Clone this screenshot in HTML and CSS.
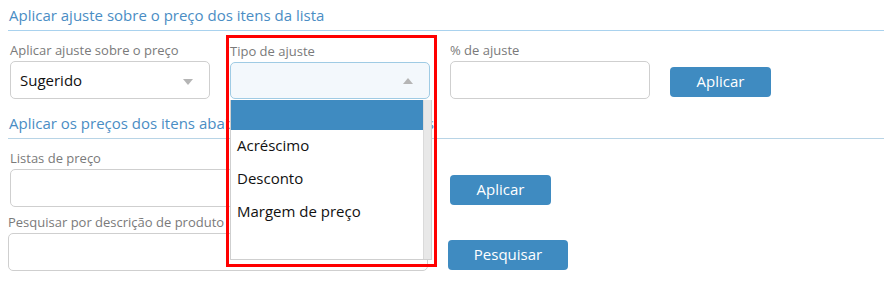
FILE: index.html
```html
<!DOCTYPE html>
<html lang="pt-BR">
<head>
    <meta charset="UTF-8">
    <title>Ajuste de preços</title>
    <link rel="stylesheet" href="styles.css">
</head>
<body>
    <div class="page">
        <div class="section">
            <div class="section-title">Aplicar ajuste sobre o preço dos itens da lista</div>
            <div class="row">
                <div class="field">
                    <label>Aplicar ajuste sobre o preço</label>
                    <div class="select">
                        <span>Sugerido</span>
                        <span class="caret down"></span>
                    </div>
                </div>
                <div class="field field-open">
                    <label>Tipo de ajuste</label>
                    <div class="select open">
                        <span></span>
                        <span class="caret up"></span>
                    </div>
                    <!-- open dropdown list -->
                    <div class="dropdown">
                        <div class="options">
                            <div class="option selected"></div>
                            <div class="option">Acréscimo</div>
                            <div class="option">Desconto</div>
                            <div class="option">Margem de preço</div>
                        </div>
                        <div class="scrollbar"></div>
                    </div>
                    <div class="highlight"></div>
                </div>
                <div class="field">
                    <label>% de ajuste</label>
                    <div class="input"></div>
                </div>
                <button class="btn">Aplicar</button>
            </div>
        </div>

        <div class="section">
            <div class="section-title">Aplicar os preços dos itens abaixo para as listas selecionadas</div>
            <div class="row">
                <div class="field wide">
                    <label>Listas de preço</label>
                    <div class="input"></div>
                </div>
                <button class="btn">Aplicar</button>
            </div>
            <div class="row row-search">
                <div class="field wide">
                    <label>Pesquisar por descrição de produto</label>
                    <div class="input"></div>
                </div>
                <button class="btn btn-wide">Pesquisar</button>
            </div>
        </div>
    </div>
</body>
</html>
```

FILE: styles.css
```css
body {
    margin: 0;
    font-family: "Open Sans", "Liberation Sans", sans-serif;
    background: #fff;
    color: #111;
}
.page {
    padding: 6px 0 0 8px;
}
.section-title {
    color: #4a8dc4;
    font-size: 15px;
    line-height: 18px;
    padding: 0 0 4px 1px;
    border-bottom: 1px solid #a9d2ee;
    margin-bottom: 12px;
    height: 20px;
}
.section + .section .section-title {
    border-bottom-color: #b8d4e6;
    margin-top: 15px;
    margin-bottom: 12px;
}
.row {
    display: flex;
    align-items: flex-end;
    gap: 20px;
    padding-left: 2px;
}
.row-search {
    padding-left: 0;
    margin-top: 8px;
}
.field {
    width: 200px;
    position: relative;
}
.field.wide {
    width: 420px;
}
label {
    display: block;
    color: #7a7a7a;
    font-size: 13px;
    line-height: 14px;
    height: 14px;
    margin-bottom: 4px;
}
.select, .input {
    box-sizing: border-box;
    height: 38px;
    border: 1px solid #cfcfcf;
    border-radius: 5px;
    display: flex;
    align-items: center;
    justify-content: space-between;
    padding: 0 16px 1px 9px;
    font-size: 15px;
}
.select.open {
    background: #f3f8fc;
    border-color: #9fcbe4;
    height: 37px;
}
.caret {
    width: 0;
    height: 0;
    border-left: 5px solid transparent;
    border-right: 5px solid transparent;
    margin-top: 4px;
}
.caret.down {
    border-top: 6px solid #b5b5b5;
}
.caret.up {
    border-bottom: 6px solid #b5b5b5;
    margin-top: 1px;
}
.btn {
    height: 30px;
    width: 101px;
    margin-bottom: 2px;
    background: #3f8bc1;
    color: #fff;
    border: none;
    border-radius: 4px;
    font-family: inherit;
    font-size: 15px;
    padding: 0 0 2px;
}
.btn-wide {
    width: 120px;
    margin-bottom: 1px;
}
.dropdown {
    position: absolute;
    left: 0;
    top: 56px;
    width: 202px;
    height: 160px;
    box-sizing: border-box;
    border: 1px solid #cfcfcf;
    border-top: none;
    background: #fff;
    display: flex;
    z-index: 5;
}
.options {
    flex: 1;
}
.option {
    height: 33px;
    line-height: 31px;
    padding-left: 6px;
    font-size: 15px;
    color: #111;
}
.option.selected {
    background: #3f8bc1;
    height: 30px;
}
.scrollbar {
    width: 7px;
    background: #e8e8e8;
    border-left: 1px solid #dadada;
}
.highlight {
    position: absolute;
    left: -4px;
    top: -9px;
    width: 205px;
    height: 226px;
    border: 3px solid #f00;
    z-index: 6;
    pointer-events: none;
}
```
